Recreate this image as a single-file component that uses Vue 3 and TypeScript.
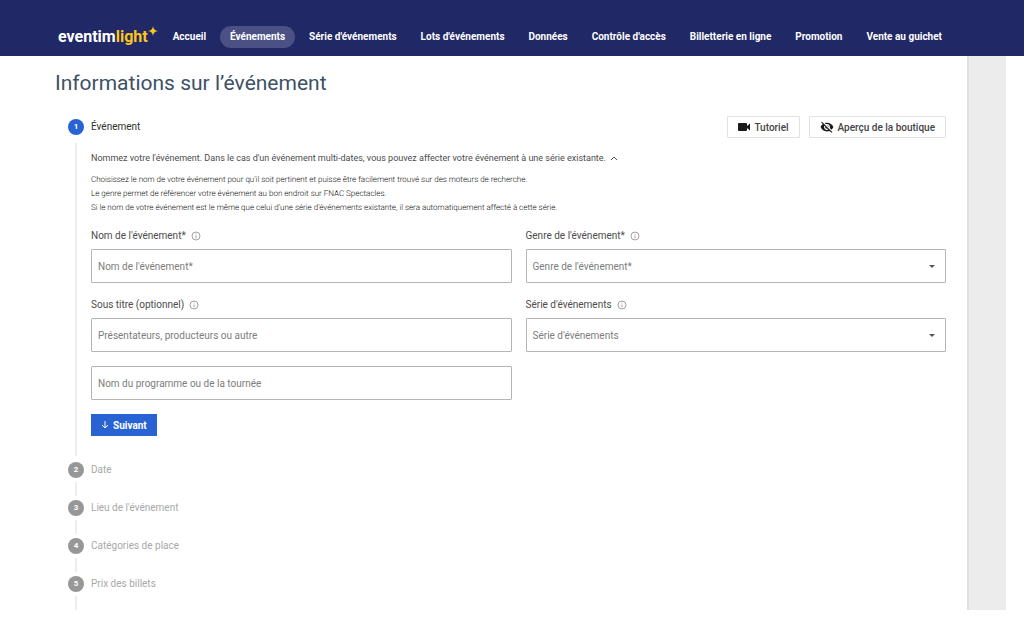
<script setup lang="ts">
import { ref } from 'vue'

interface NavItem {
  label: string
  active?: boolean
}

interface Step {
  number: number
  label: string
}

const navItems: NavItem[] = [
  { label: 'Accueil' },
  { label: 'Événements', active: true },
  { label: "Série d'événements" },
  { label: "Lots d'événements" },
  { label: 'Données' },
  { label: "Contrôle d'accès" },
  { label: 'Billetterie en ligne' },
  { label: 'Promotion' },
  { label: 'Vente au guichet' },
]

const nextSteps: Step[] = [
  { number: 2, label: 'Date' },
  { number: 3, label: "Lieu de l'événement" },
  { number: 4, label: 'Catégories de place' },
  { number: 5, label: 'Prix des billets' },
]

const name = ref('')
const genre = ref('')
const subtitle = ref('')
const tour = ref('')
const series = ref('')
</script>

<template>
  <div class="app">
    <header class="topbar">
      <a class="logo" href="#">
        <span>eventim</span><span class="logo-light">light</span>
        <svg class="logo-star" viewBox="0 0 10 10" aria-hidden="true">
          <path d="M5 0Q5.4 4.6 10 5Q5.4 5.4 5 10Q4.6 5.4 0 5Q4.6 4.6 5 0Z" />
        </svg>
      </a>
      <nav class="nav">
        <a
          v-for="item in navItems"
          :key="item.label"
          href="#"
          class="nav-link"
          :class="{ active: item.active }"
        >{{ item.label }}</a>
      </nav>
    </header>

    <div class="body">
      <main class="panel">
        <h1>Informations sur l’événement</h1>

        <section class="step open">
          <div class="step-head">
            <span class="badge current">1</span>
            <h2>Événement</h2>
            <div class="actions">
              <button type="button" class="outline">
                <svg class="icon-video" viewBox="0 0 12 10" aria-hidden="true">
                  <path d="M1 1h7q1 0 1 1v2l3-2.500v7L9 6v2q0 1-1 1H1Q0 9 0 8V2Q0 1 1 1Z" />
                </svg>
                Tutoriel
              </button>
              <button type="button" class="outline">
                <svg class="icon-eye" viewBox="0 0 24 24" aria-hidden="true">
                  <path d="M12 7c2.760 0 5 2.240 5 5 0 .650-.130 1.260-.360 1.830l2.920 2.920c1.510-1.260 2.700-2.890 3.430-4.750-1.730-4.390-6-7.500-11-7.500-1.400 0-2.740.250-3.980.700l2.160 2.160C10.740 7.130 11.350 7 12 7zM2 4.270l2.280 2.280.460.460C3.080 8.300 1.780 10.020 1 12c1.730 4.390 6 7.500 11 7.500 1.550 0 3.030-.300 4.380-.840l.420.420L19.730 22 21 20.730 3.270 3 2 4.270zM7.530 9.800l1.550 1.550c-.050.210-.080.430-.080.650 0 1.660 1.340 3 3 3 .220 0 .440-.030.650-.080l1.550 1.550c-.670.330-1.410.530-2.200.530-2.760 0-5-2.240-5-5 0-.790.200-1.530.530-2.200zm4.310-.780l3.150 3.150.020-.160c0-1.660-1.340-3-3-3l-.170.010z" />
                </svg>
                Aperçu de la boutique
              </button>
            </div>
          </div>

          <div class="step-body">
            <button type="button" class="summary" aria-expanded="true">
              Nommez votre l'événement. Dans le cas d'un événement multi-dates, vous pouvez affecter votre événement à une série existante.
              <svg class="icon-chevron" viewBox="0 0 8 6" aria-hidden="true">
                <path d="M1 5L4 2L7 5" />
              </svg>
            </button>
            <div class="details">
              <p>Choisissez le nom de votre événement pour qu'il soit pertinent et puisse être facilement trouvé sur des moteurs de recherche.</p>
              <p>Le genre permet de référencer votre événement au bon endroit sur FNAC Spectacles.</p>
              <p>Si le nom de votre événement est le même que celui d'une série d'événements existante, il sera automatiquement affecté à cette série.</p>
            </div>

            <form class="form" @submit.prevent>
              <div class="field">
                <div class="label-row">
                  <label for="name">Nom de l'événement*</label>
                  <svg class="icon-info" viewBox="0 0 10 10" aria-hidden="true">
                    <circle cx="5" cy="5" r="4" /><path d="M5 4.500V7.300M5 2.600V3.500" />
                  </svg>
                </div>
                <input id="name" v-model="name" type="text" placeholder="Nom de l'événement*" />
              </div>

              <div class="field">
                <div class="label-row">
                  <label for="genre">Genre de l'événement*</label>
                  <svg class="icon-info" viewBox="0 0 10 10" aria-hidden="true">
                    <circle cx="5" cy="5" r="4" /><path d="M5 4.500V7.300M5 2.600V3.500" />
                  </svg>
                </div>
                <div class="select">
                  <select id="genre" v-model="genre">
                    <option value="">Genre de l'événement*</option>
                  </select>
                  <svg class="caret" viewBox="0 0 6 3" aria-hidden="true"><path d="M0 0H6L3 3Z" /></svg>
                </div>
              </div>

              <div class="field">
                <div class="label-row">
                  <label for="subtitle">Sous titre (optionnel)</label>
                  <svg class="icon-info" viewBox="0 0 10 10" aria-hidden="true">
                    <circle cx="5" cy="5" r="4" /><path d="M5 4.500V7.300M5 2.600V3.500" />
                  </svg>
                </div>
                <input id="subtitle" v-model="subtitle" type="text" placeholder="Présentateurs, producteurs ou autre" />
              </div>

              <div class="field">
                <div class="label-row">
                  <label for="series">Série d'événements</label>
                  <svg class="icon-info" viewBox="0 0 10 10" aria-hidden="true">
                    <circle cx="5" cy="5" r="4" /><path d="M5 4.500V7.300M5 2.600V3.500" />
                  </svg>
                </div>
                <div class="select">
                  <select id="series" v-model="series">
                    <option value="">Série d'événements</option>
                  </select>
                  <svg class="caret" viewBox="0 0 6 3" aria-hidden="true"><path d="M0 0H6L3 3Z" /></svg>
                </div>
              </div>

              <div class="field">
                <input
                  v-model="tour"
                  type="text"
                  aria-label="Nom du programme ou de la tournée"
                  placeholder="Nom du programme ou de la tournée"
                />
              </div>
            </form>

            <button type="button" class="next">
              <svg class="icon-down" viewBox="0 0 8 8" aria-hidden="true">
                <path d="M4 0V7M1 4L4 7L7 4" />
              </svg>
              Suivant
            </button>
          </div>
        </section>

        <section v-for="step in nextSteps" :key="step.number" class="step closed">
          <div class="step-head">
            <span class="badge">{{ step.number }}</span>
            <h2>{{ step.label }}</h2>
          </div>
          <div class="connector"></div>
        </section>
      </main>
      <aside class="gutter"></aside>
    </div>
  </div>
</template>

<style>
body {
  background: #ffffff;
}
</style>

<style scoped>
.app,
.app * {
  box-sizing: border-box;
}

.app {
  font-family: Roboto, "Liberation Sans", sans-serif;
  font-size: 10px;
  color: #4c4c4c;
}

button,
input,
select {
  font: inherit;
  color: inherit;
}

a {
  color: inherit;
  text-decoration: none;
}

.topbar {
  display: flex;
  align-items: center;
  height: 56px;
  padding: 18px 72px 0 58px;
  background: #202866;
  color: #ffffff;
}

.logo {
  display: flex;
  align-items: center;
  font-size: 16px;
  line-height: 22px;
  font-weight: 700;
}

.logo-light {
  color: #fdc51b;
}

.logo-star {
  width: 10px;
  height: 10px;
  align-self: flex-start;
  fill: #fdc51b;
}

.nav {
  flex: 1;
  display: flex;
  justify-content: space-between;
  margin-left: 5px;
}

.nav-link {
  padding: 0 10px;
  border-radius: 11px;
  font-weight: 700;
  line-height: 22px;
  white-space: nowrap;
}

.nav-link.active {
  background: #4b5185;
}

.body {
  display: flex;
  padding-right: 18px;
}

.panel {
  flex: 1;
  min-width: 0;
  padding: 12px 21px 0 55px;
}

.gutter {
  width: 39px;
  background: #ececec;
  border-left: 2px solid #e0e0e0;
}

h1 {
  margin: 0 0 18px;
  font-size: 21px;
  line-height: 30px;
  font-weight: 400;
  color: #3d5166;
}

.step {
  margin-left: 13px;
}

.step-head {
  display: flex;
  align-items: center;
  gap: 7px;
  height: 16px;
}

.step.open .step-head {
  height: 22px;
}

.badge {
  width: 16px;
  height: 16px;
  border-radius: 50%;
  background: #979797;
  color: #ffffff;
  font-size: 8px;
  line-height: 16px;
  font-weight: 700;
  text-align: center;
}

.badge.current {
  background: #2962d3;
}

h2 {
  margin: 0;
  font-size: 10px;
  line-height: 16px;
  font-weight: 400;
  color: #a8a8a8;
}

.open h2 {
  color: #2e2e2e;
}

.actions {
  display: flex;
  gap: 9px;
  margin-left: auto;
}

.outline {
  display: flex;
  align-items: center;
  gap: 4px;
  height: 22px;
  padding: 0 10px;
  border: 1px solid #e2e2e2;
  border-radius: 1px;
  background: #ffffff;
  color: #444444;
  font-weight: 500;
}

.icon-video {
  width: 12px;
  height: 10px;
  fill: #1a1a1a;
}

.icon-eye {
  width: 14px;
  height: 14px;
  fill: #1a1a1a;
}

.step-body {
  margin: 5px 0 6px 7px;
  padding: 6px 0 20px 14px;
  border-left: 2px solid #ededed;
}

.summary {
  display: flex;
  align-items: center;
  gap: 4px;
  padding: 0;
  border: 0;
  background: none;
  font-size: 9px;
  line-height: 18px;
  text-align: left;
}

.icon-chevron {
  width: 8px;
  height: 6px;
  fill: none;
  stroke: #555555;
}

.details {
  margin: 6px 0 13px;
  font-size: 8px;
  line-height: 14px;
  font-weight: 300;
  color: #111111;
  text-rendering: geometricPrecision;
}

.details p {
  margin: 0;
}

.form {
  display: grid;
  grid-template-columns: 1fr 1fr;
  gap: 14px;
}

.label-row {
  display: flex;
  align-items: center;
  gap: 5px;
  margin-bottom: 5px;
  line-height: 16px;
}

.icon-info {
  width: 10px;
  height: 10px;
  fill: none;
  stroke: #a3a3a3;
}

input,
select {
  display: block;
  width: 100%;
  height: 34px;
  padding: 0 6px;
  border: 1px solid #b5b5b5;
  border-radius: 1px;
  background: #ffffff;
  color: #7d7d7d;
  appearance: none;
}

input::placeholder {
  color: #7d7d7d;
  opacity: 1;
}

.select {
  display: grid;
  align-items: center;
}

.select > * {
  grid-area: 1 / 1;
}

.caret {
  width: 6px;
  height: 3px;
  justify-self: end;
  margin-right: 11px;
  fill: #555555;
  pointer-events: none;
}

.next {
  display: flex;
  align-items: center;
  gap: 4px;
  height: 22px;
  margin-top: 14px;
  padding: 0 10px;
  border: 0;
  background: #2962d3;
  color: #ffffff;
  font-weight: 700;
}

.icon-down {
  width: 8px;
  height: 8px;
  fill: none;
  stroke: #ffffff;
}

.connector {
  width: 2px;
  height: 14px;
  margin: 4px 0 4px 7px;
  background: #ededed;
}

.closed:last-child .connector {
  margin-bottom: 0;
}
</style>
